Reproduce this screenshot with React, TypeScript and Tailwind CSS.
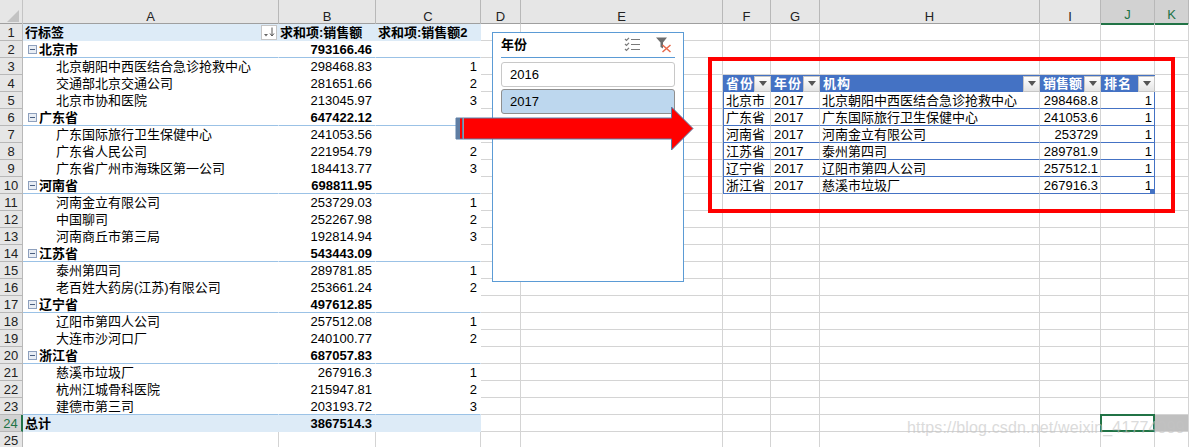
const FONT = "font-['Liberation_Sans','Noto_Sans_CJK_SC',sans-serif]";
const GRID = "grid grid-cols-[23px_256px_97px_105px_40px_202px_48px_49px_220px_61px_54px_34px]";

type PivotRow = { label: string; sum?: string; rank?: string; kind: "head" | "group" | "child" | "total" };

const pivot: PivotRow[] = [
  { label: "行标签", sum: "求和项:销售额", rank: "求和项:销售额2", kind: "head" },
  { label: "北京市", sum: "793166.46", kind: "group" },
  { label: "北京朝阳中西医结合急诊抢救中心", sum: "298468.83", rank: "1", kind: "child" },
  { label: "交通部北京交通公司", sum: "281651.66", rank: "2", kind: "child" },
  { label: "北京市协和医院", sum: "213045.97", rank: "3", kind: "child" },
  { label: "广东省", sum: "647422.12", kind: "group" },
  { label: "广东国际旅行卫生保健中心", sum: "241053.56", rank: "1", kind: "child" },
  { label: "广东省人民公司", sum: "221954.79", rank: "2", kind: "child" },
  { label: "广东省广州市海珠区第一公司", sum: "184413.77", rank: "3", kind: "child" },
  { label: "河南省", sum: "698811.95", kind: "group" },
  { label: "河南金立有限公司", sum: "253729.03", rank: "1", kind: "child" },
  { label: "中国聊司", sum: "252267.98", rank: "2", kind: "child" },
  { label: "河南商丘市第三局", sum: "192814.94", rank: "3", kind: "child" },
  { label: "江苏省", sum: "543443.09", kind: "group" },
  { label: "泰州第四司", sum: "289781.85", rank: "1", kind: "child" },
  { label: "老百姓大药房(江苏)有限公司", sum: "253661.24", rank: "2", kind: "child" },
  { label: "辽宁省", sum: "497612.85", kind: "group" },
  { label: "辽阳市第四人公司", sum: "257512.08", rank: "1", kind: "child" },
  { label: "大连市沙河口厂", sum: "240100.77", rank: "2", kind: "child" },
  { label: "浙江省", sum: "687057.83", kind: "group" },
  { label: "慈溪市垃圾厂", sum: "267916.3", rank: "1", kind: "child" },
  { label: "杭州江城骨科医院", sum: "215947.81", rank: "2", kind: "child" },
  { label: "建德市第三司", sum: "203193.72", rank: "3", kind: "child" },
  { label: "总计", sum: "3867514.3", kind: "total" },
];

const result = [
  ["北京市", "2017", "北京朝阳中西医结合急诊抢救中心", "298468.8", "1"],
  ["广东省", "2017", "广东国际旅行卫生保健中心", "241053.6", "1"],
  ["河南省", "2017", "河南金立有限公司", "253729", "1"],
  ["江苏省", "2017", "泰州第四司", "289781.9", "1"],
  ["辽宁省", "2017", "辽阳市第四人公司", "257512.1", "1"],
  ["浙江省", "2017", "慈溪市垃圾厂", "267916.3", "1"],
];

const resultHead = ["省份", "年份", "机构", "销售额", "排名"];
const colLetters = ["A", "B", "C", "D", "E", "F", "G", "H", "I", "J", "K"];
const rowNumbers = Array.from({ length: 25 }, (_, i) => i + 1);

function Triangle() {
  return (
    <svg width="8" height="5" viewBox="0 0 8 5">
      <path d="M0 0h8L4 5z" fill="#555" />
    </svg>
  );
}

function DropButton() {
  return (
    <span className="w-[17px] h-[16px] shrink-0 flex items-center justify-center border border-[#c6c6c6] bg-gradient-to-b from-white to-[#e4e4e4]">
      <Triangle />
    </span>
  );
}

function SortButton() {
  return (
    <span className="w-[16px] h-[15px] mr-px flex items-center justify-center bg-white border border-[#c6c6c6]">
      <svg width="12" height="10" viewBox="0 0 12 10" fill="none">
        <path d="M1 7h4L3 9.500z" fill="#666" />
        <path d="M9 .5v8M7 6.500l2 2.500 2-2.500" stroke="#555" strokeWidth="1" />
      </svg>
    </span>
  );
}

function Cell({ className = "", children }: { className?: string; children?: React.ReactNode }) {
  return (
    <div className={`h-[17px] leading-[17px] text-[13px] text-black whitespace-nowrap border-r border-b border-[#d4d4d4] ${className}`}>
      {children}
    </div>
  );
}

function PivotCells({ row }: { row: PivotRow }) {
  const bold = row.kind !== "child" ? "font-bold" : "";
  const line =
    row.kind === "group" || row.label === "建德市第三司"
      ? "border-b-[#9bc2e6]"
      : "border-b-transparent";
  const bg = row.kind === "head" || row.kind === "total" ? "bg-[#ddebf7] border-b-transparent" : "bg-white";
  return (
    <>
      <Cell className={`border-r-transparent ${line} ${bg} ${bold} flex items-center ${row.kind === "child" ? "pl-[33px]" : row.kind === "group" ? "pl-[5px]" : "pl-[2px]"}`}>
        {row.kind === "group" && (
          <span className="w-[9px] h-[9px] mr-[2px] shrink-0 flex items-center justify-center border border-[#8ea0bd] bg-[#e8edf4]">
            <span className="w-[5px] h-px bg-[#4a5f80]" />
          </span>
        )}
        <span className="flex-1">{row.label}</span>
        {row.kind === "head" && <SortButton />}
      </Cell>
      <Cell className={`border-r-transparent ${line} ${bg} ${bold} ${row.kind === "head" ? "pl-px" : "text-right pr-[3px] text-[12.5px]"}`}>
        {row.sum}
      </Cell>
      <Cell className={`border-r-transparent ${line} ${bg} ${bold} ${row.kind === "head" ? "pl-[2px]" : "text-right pr-[3px] text-[12.5px]"}`}>
        {row.rank}
      </Cell>
    </>
  );
}

function ResultCells({ rowNum }: { rowNum: number }) {
  if (rowNum === 4) {
    return (
      <>
        {resultHead.map((h, i) => (
          <div
            key={h}
            className="h-[17px] flex items-center pl-[3px] bg-[#4472c4] text-white text-[13px] font-bold leading-[17px] whitespace-nowrap"
          >
            <span className={`flex-1 min-w-0 overflow-hidden ${i === 3 ? "" : "tracking-[1px]"}`}>{h}</span>
            <DropButton />
          </div>
        ))}
      </>
    );
  }
  const data = result[rowNum - 5];
  if (!data) return null;
  const edge = "border-b-[#4472c4]";
  return (
    <>
      <Cell className={`${edge} pl-[3px] shadow-[inset_1px_0_0_#4472c4]`}>{data[0]}</Cell>
      <Cell className={`${edge} pl-[3px] text-[12px] tracking-[0.2px]`}>{data[1]}</Cell>
      <Cell className={`${edge} pl-[2px]`}>{data[2]}</Cell>
      <Cell className={`${edge} text-right pr-[2px] text-[12.5px]`}>{data[3]}</Cell>
      <Cell className={`${edge} border-r-[#4472c4] text-right pr-[2px] text-[12.5px] relative`}>
        {data[4]}
        {rowNum === 10 && <span className="absolute right-0 bottom-0 w-[4px] h-[4px] bg-[#4472c4]" />}
      </Cell>
    </>
  );
}

function ListCheckIcon() {
  return (
    <svg width="17" height="15" viewBox="0 0 17 15" fill="none" stroke="#7a7a7a" strokeWidth="1.2">
      <path d="M1 2l1.5 1.500L5 .8M1 7l1.500 1.500L5 5.800M1 12l1.500 1.500L5 10.800" />
      <path d="M7 2.500h9M7 7.500h9M7 12.500h9" />
    </svg>
  );
}

function ClearFilterIcon() {
  return (
    <svg width="16" height="16" viewBox="0 0 16 16">
      <path d="M0 .5h11L7 5.500V11.500L4.500 10V5.500z" fill="#6e6e6e" />
      <path d="M6.500 8l8 7M14.500 8l-8 7" stroke="#e8694a" strokeWidth="1.500" />
    </svg>
  );
}

function Slicer() {
  return (
    <div className="absolute left-[492px] top-[32px] w-[192px] h-[250px] bg-white border border-[#5b9bd5] px-[8px]">
      <div className="h-[25px] flex items-center border-b border-[#5b9bd5]">
        <span className="flex-1 text-[13px] font-bold text-black">年份</span>
        <span className="mr-[15px] mt-[-2px] flex"><ListCheckIcon /></span>
        <span className="mr-[3px] mt-[-1px] flex"><ClearFilterIcon /></span>
      </div>
      <div className="mt-[4px] h-[25px] flex items-center pl-[8px] text-[13px] text-black border border-[#c8c8c8] rounded-[3px]">2016</div>
      <div className="mt-[2px] h-[25px] flex items-center pl-[8px] text-[13px] text-black bg-[#bdd7ee] border border-[#8f8f8f] rounded-[3px]">2017</div>
    </div>
  );
}

function Arrow() {
  return (
    <svg className="absolute left-[455px] top-[106px]" width="240" height="46" viewBox="0 0 240 46">
      <path d="M1 12h215.500V1L238 22.500 216.500 44V33H1z" fill="#ff0000" stroke="#5a7fa8" strokeWidth="1" />
      <rect x="1" y="12" width="4" height="21" fill="#5f7ea3" />
      <rect x="7" y="12" width="1" height="21" fill="#5f7ea3" />
      <rect x="8" y="12" width="1" height="21" fill="#8a9bb0" />
    </svg>
  );
}

export default function App() {
  return (
    <div className={`relative w-[1189px] h-[447px] overflow-hidden bg-white ${FONT}`}>
      <div className={`${GRID} h-[24px] bg-[#e6e6e6] border-b border-[#9f9f9f]`}>
        <div className="relative border-r border-[#c4c4c4]">
          <span className="absolute right-[3px] bottom-[3px] w-0 h-0 border-l-[12px] border-t-[12px] border-l-transparent border-t-transparent border-b-0 border-r-[12px] border-r-[#c2c2c2]" />
        </div>
        {colLetters.map((c) => (
          <div
            key={c}
            className={`flex items-end justify-center pt-[6px] text-[13px] leading-[17px] border-r border-[#b8b8b8] ${c === "J" || c === "K" ? "bg-[#d2d2d2] text-[#217346] border-b-2 border-b-[#217346]" : "text-[#222]"}`}
          >
            {c}
          </div>
        ))}
      </div>

      {rowNumbers.map((r) => {
        const row = pivot[r - 1];
        const hasResult = r >= 4 && r <= 10;
        const selected = r === 24;
        return (
          <div key={r} className={GRID}>
            <div
              className={`h-[17px] leading-[17px] text-center text-[13px] border-b ${selected ? "bg-[#d2d2d2] text-[#217346] border-r-2 border-r-[#217346] border-b-[#b8b8b8]" : "bg-[#e6e6e6] text-[#222] border-r border-[#b8b8b8]"}`}
            >
              {r}
            </div>
            {row ? <PivotCells row={row} /> : (
              <>
                <Cell className="border-b-transparent" />
                <Cell className="border-b-transparent" />
                <Cell className="border-b-transparent" />
              </>
            )}
            <Cell />
            <Cell />
            {hasResult ? <ResultCells rowNum={r} /> : (
              <>
                <Cell />
                <Cell />
                <Cell />
                <Cell />
                <Cell className="relative">
                  {selected && <span className="absolute -left-px -top-px -right-px -bottom-px border-2 border-[#217346]" />}
                </Cell>
              </>
            )}
            <Cell className={selected ? "bg-[#c0c0c0]" : ""} />
          </div>
        );
      })}

      <Slicer />
      <Arrow />
      <div className="absolute left-[708px] top-[57px] w-[467px] h-[156px] border-[4px] border-[#ff0000]" />
      <div className="absolute left-[907px] top-[418px] text-[16px] leading-[20px] tracking-[0.15px] text-[#c4c4c4] opacity-60 whitespace-nowrap">
        https://blog.csdn.net/weixin_41774099
      </div>
    </div>
  );
}
